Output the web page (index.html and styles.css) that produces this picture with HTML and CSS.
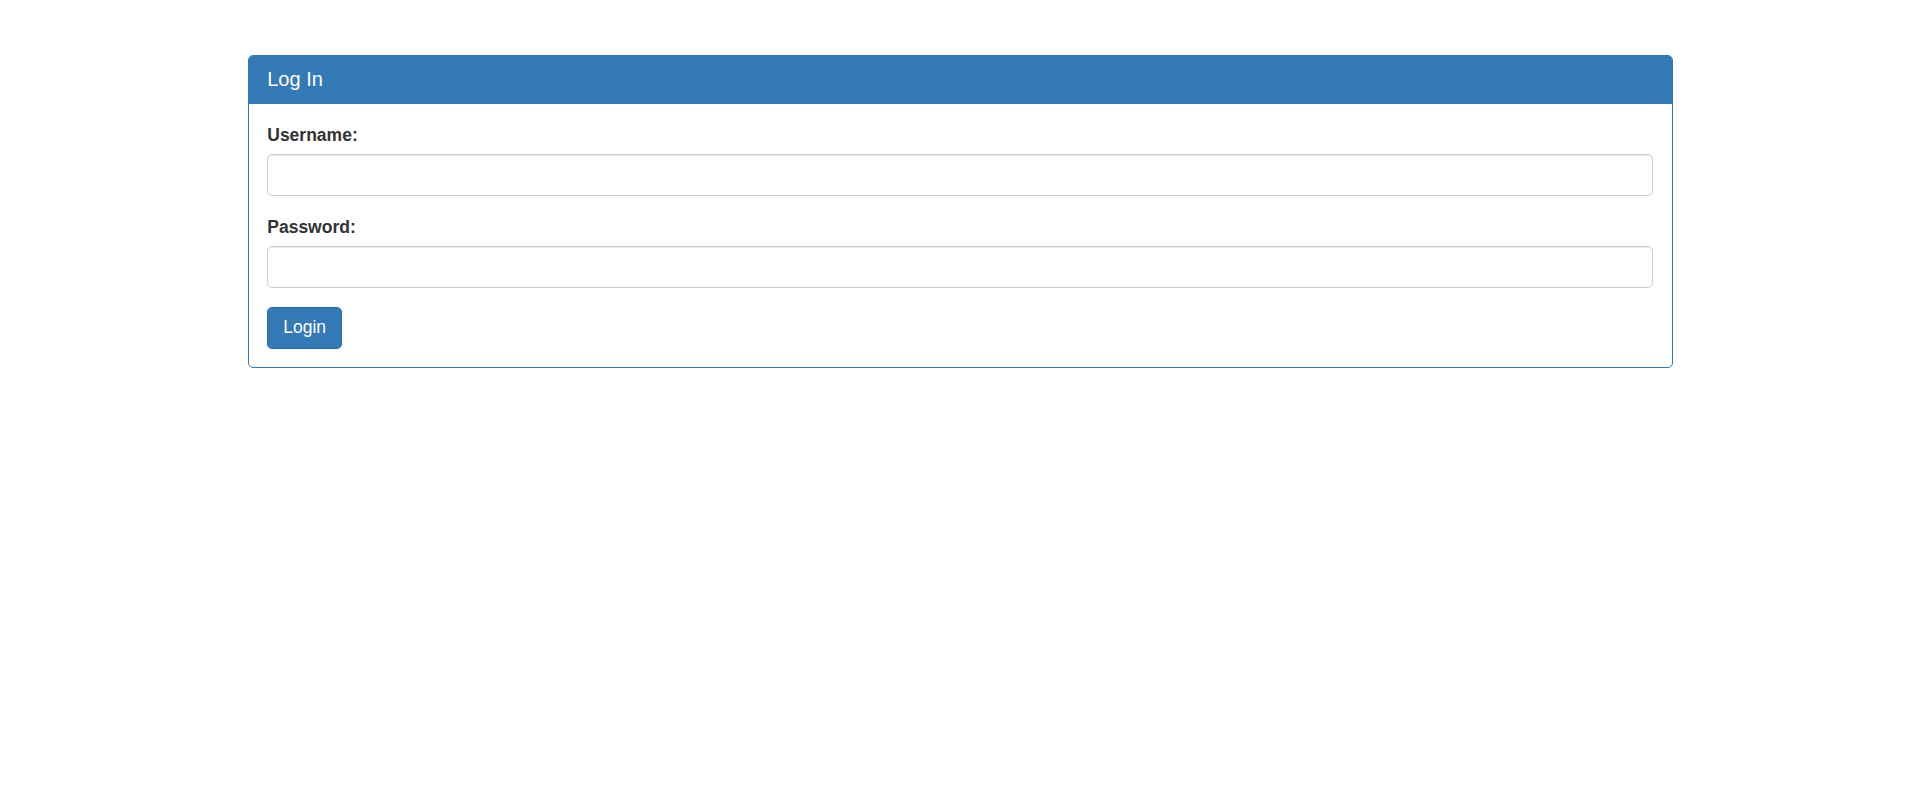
FILE: index.html
```html
<!DOCTYPE html>
<html>
<head>
<meta charset="utf-8">
<title>Log In</title>
<link rel="stylesheet" href="styles.css">
</head>
<body>
<div class="container">
  <div class="panel">
    <div class="panel-heading"><h3 class="panel-title">Log In</h3></div>
    <div class="panel-body">
      <form>
        <div class="form-group">
          <label class="label" for="username">Username:</label>
          <input class="form-control" id="username" type="text">
        </div>
        <div class="form-group">
          <label class="label" for="password">Password:</label>
          <input class="form-control" id="password" type="password">
        </div>
        <button class="btn" type="button">Login</button>
      </form>
    </div>
  </div>
</div>
</body>
</html>
```
FILE: styles.css
```css
* { box-sizing: border-box; }
html, body { margin: 0; padding: 0; background: #fff; }
body {
  font-family: "Liberation Sans", Arial, Helvetica, sans-serif;
  font-size: 17.5px;
  line-height: 25px;
  color: #333;
}
.container {
  width: 1462.5px;
  margin: 0 auto;
  padding: 55px 18.75px 0;
}
.panel {
  border: 1px solid #337ab7;
  border-radius: 5px;
  background: #fff;
  overflow: hidden;
}
.panel-heading {
  background: #337ab7;
  color: #fff;
  padding: 11.5px 18.75px 13.5px 18.75px;
  border-bottom: 1px solid #337ab7;
}
.panel-title {
  margin: 0;
  font-size: 20px;
  line-height: 22px;
  font-weight: 400;
}
.panel-body {
  padding: 18.5px 18.75px 17.75px;
}
.form-group { margin-bottom: 18.5px; }
.label {
  display: block;
  font-weight: 700;
  margin-bottom: 6px;
}
.form-control {
  display: block;
  width: 100%;
  height: 42.5px;
  padding: 7.5px 15px;
  font: inherit;
  color: #555;
  border: 1px solid #ccc;
  border-radius: 5px;
  background: #fff;
  box-shadow: inset 0 1px 1px rgba(0,0,0,.075);
  margin: 0;
}
.btn {
  display: inline-block;
  height: 42.5px;
  padding: 7.5px 15px;
  font: inherit;
  color: #fff;
  background: #337ab7;
  border: 1px solid #2e6da4;
  border-radius: 5px;
  cursor: pointer;
  margin: 0;
}
```
